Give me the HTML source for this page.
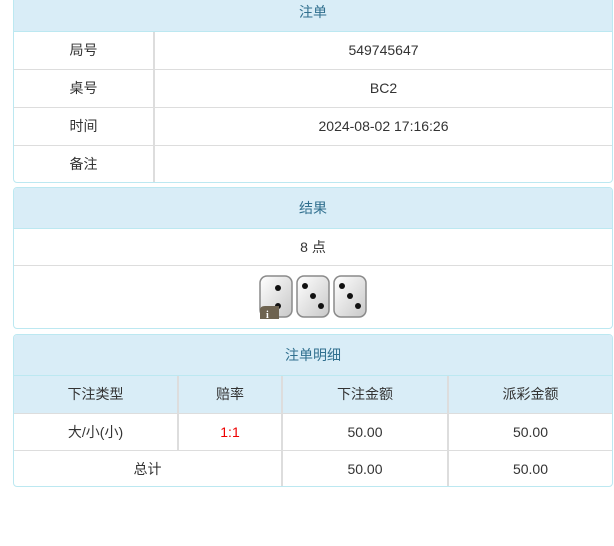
<!DOCTYPE html>
<html><head><meta charset="utf-8"><style>
*{box-sizing:border-box;margin:0;padding:0}
body{width:614px;height:546px;background:#fff;font-family:"Liberation Sans","Noto Sans CJK SC",sans-serif;font-size:14px;color:#333;position:relative;overflow:hidden}
.p{position:absolute;left:13px;width:600px;border:1px solid #bce8f1;border-radius:4px;overflow:hidden;background:#fff}
.h{background:#d9edf7;color:#31708f;text-align:center;border-bottom:1px solid #bce8f1}
table{border-collapse:collapse;width:100%}
td{text-align:center;border-top:1px solid #ddd;border-left:2px solid #ddd}
tr td:first-child{border-left:none}
tr:first-child td{border-top:none}
.th td{background:#d9edf7;border-left-color:#ddd}
</style></head><body>
<div class="p" style="top:-5px;height:188px;border-radius:0 0 4px 4px">
<div class="h" style="height:36px;line-height:32px">注单</div>
<table>
<tr style="height:37px"><td style="width:140px">局号</td><td>549745647</td></tr>
<tr style="height:38px"><td>桌号</td><td>BC2</td></tr>
<tr style="height:38px"><td>时间</td><td>2024-08-02 17:16:26</td></tr>
<tr style="height:38px"><td>备注</td><td></td></tr>
</table></div>
<div class="p" style="top:187px;height:142px">
<div class="h" style="height:41px;line-height:40px">结果</div>
<div style="height:37px;line-height:36px;text-align:center;border-bottom:1px solid #ddd">8 点</div>
<svg style="position:absolute;left:245px;top:87px" width="110" height="46">
<defs><linearGradient id="g" x1="0" y1="0" x2="1" y2="1"><stop offset="0" stop-color="#fff"/><stop offset="1" stop-color="#c8c8c8"/></linearGradient></defs>
<g fill="url(#g)" stroke="#8a8a8a" stroke-width="1.5">
<rect x="1" y="1" width="32" height="41" rx="7"/><rect x="38" y="1" width="32" height="41" rx="7"/><rect x="75" y="1" width="32" height="41" rx="7"/></g>
<g fill="#111"><circle cx="19" cy="13" r="3"/><circle cx="19" cy="31" r="3"/>
<circle cx="46" cy="11" r="3"/><circle cx="54" cy="21" r="3"/><circle cx="62" cy="31" r="3"/>
<circle cx="83" cy="11" r="3"/><circle cx="91" cy="21" r="3"/><circle cx="99" cy="31" r="3"/></g>
<path d="M1 44 L1 35 Q1 31 6 31 L20 31 L20 44Z" fill="#6e6350"/><text x="7" y="43" font-size="10" font-weight="bold" fill="#fff" font-family="Liberation Serif">i</text>
</svg>
</div>
<div class="p" style="top:334px;height:153px">
<div class="h" style="height:41px;line-height:40px">注单明细</div>
<table>
<tr class="th" style="height:37px"><td style="width:164px">下注类型</td><td style="width:104px">赔率</td><td style="width:166px">下注金额</td><td>派彩金额</td></tr>
<tr style="height:37px"><td>大/小(小)</td><td style="color:#e00">1:1</td><td>50.00</td><td>50.00</td></tr>
<tr style="height:37px"><td colspan="2">总计</td><td>50.00</td><td>50.00</td></tr>
</table></div>
</body></html>
